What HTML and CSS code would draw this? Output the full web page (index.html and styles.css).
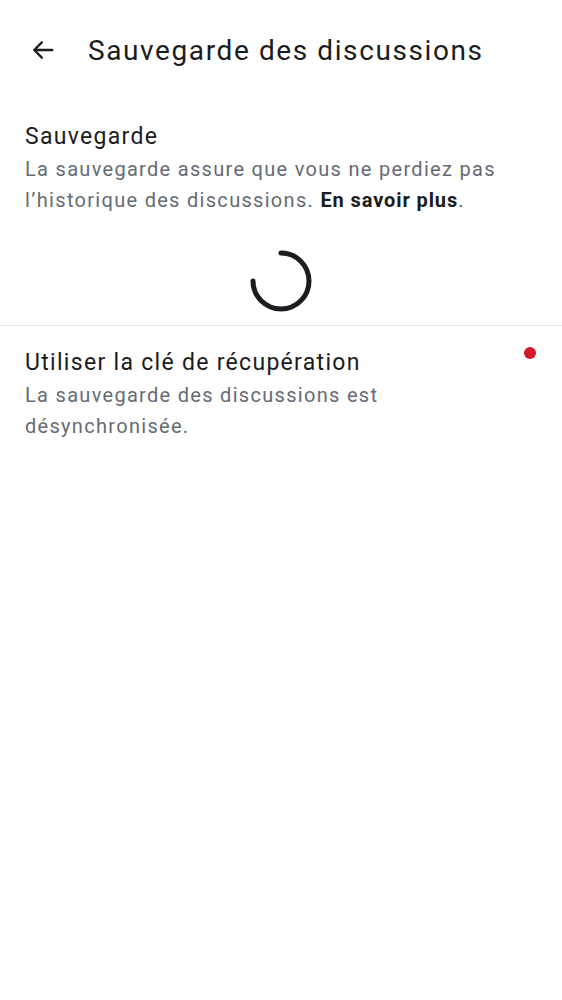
FILE: index.html
```html
<!DOCTYPE html>
<html lang="fr">
<head>
<meta charset="utf-8">
<link rel="stylesheet" href="styles.css">
</head>
<body>
<header class="toolbar">
  <svg class="back" width="28" height="28" viewBox="0 0 24 24" aria-hidden="true">
    <path d="M20 12H4.5M11 5.5L4.5 12l6.5 6.5" fill="none" stroke="#1b1c20" stroke-width="2" stroke-linecap="round" stroke-linejoin="round"/>
  </svg>
  <h1 class="title">Sauvegarde des discussions</h1>
</header>
<section class="item">
  <div class="item-title">Sauvegarde</div>
  <div class="item-sub">La sauvegarde assure que vous ne perdiez pas l’historique des discussions. <b>En savoir plus</b>.</div>
</section>
<div class="spinner-row">
  <svg width="66" height="66" viewBox="0 0 66 66" aria-hidden="true">
    <path d="M33 5 A28 28 0 1 1 5 33" fill="none" stroke="#1b1c20" stroke-width="5" stroke-linecap="round"/>
  </svg>
</div>
<section class="item item-row">
  <div class="item-text">
    <div class="item-title">Utiliser la clé de récupération</div>
    <div class="item-sub narrow">La sauvegarde des discussions est désynchronisée.</div>
  </div>
  <span class="dot"></span>
</section>
</body>
</html>
```
FILE: styles.css
```css
html, body {
  margin: 0;
  padding: 0;
  background: #ffffff;
  font-family: Roboto, "Noto Sans", sans-serif;
  color: #1b1c20;
}
.toolbar {
  display: flex;
  align-items: center;
  height: 100px;
  padding-left: 29px;
}
.back {
  flex: none;
}
.title {
  margin: 0 0 0 31px;
  font-size: 28px;
  font-weight: 400;
  letter-spacing: 1.6px;
}
.item {
  padding: 21px 25px 0 25px;
}
.item-title {
  font-size: 23px;
  line-height: 32px;
  letter-spacing: 1.3px;
  color: #1b1c20;
}
.item-sub {
  margin-top: 1px;
  font-size: 20px;
  line-height: 31px;
  letter-spacing: 1.3px;
  color: #656b75;
}
.item-sub b {
  color: #1b1c20;
  font-weight: 700;
  letter-spacing: 0.9px;
}
.narrow {
  max-width: 400px;
}
.spinner-row {
  display: flex;
  justify-content: center;
  padding: 32px 0 11px;
  border-bottom: 1px solid #e7e8ec;
}
.item-row {
  display: flex;
  justify-content: space-between;
  align-items: flex-start;
  padding-top: 21px;
}
.item-row .item-sub {
  margin-top: 1px;
}
.dot {
  flex: none;
  width: 12px;
  height: 12px;
  border-radius: 50%;
  background: #d5192b;
  margin-top: 0;
  margin-right: 1px;
}
```
